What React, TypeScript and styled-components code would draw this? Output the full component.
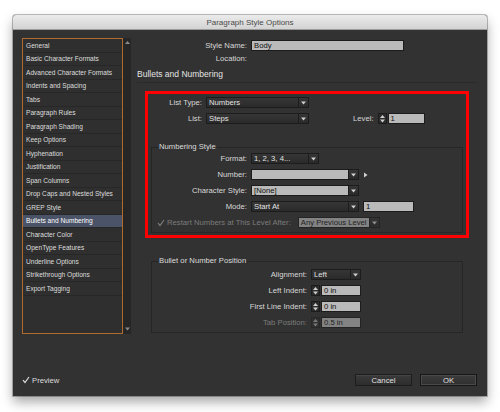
import styled, { createGlobalStyle } from "styled-components";

const GlobalStyle = createGlobalStyle`
  html, body {
    margin: 0;
    padding: 0;
    background: #ffffff;
  }
  body {
    font-family: "Liberation Sans", Arial, sans-serif;
  }
`;

const Page = styled.div`
  padding: 15px 13px 16px 13px;
  width: 474px;
`;

const Window = styled.div`
  width: 474px;
  height: 381px;
  display: flex;
  flex-direction: column;
  background: #323232;
  box-shadow: 0 6px 12px rgba(0, 0, 0, 0.35), 0 0 0 1px rgba(0, 0, 0, 0.25);
  border-radius: 3px 3px 0 0;
  overflow: hidden;
`;

const TitleBar = styled.div`
  height: 15px;
  flex: none;
  display: flex;
  align-items: center;
  justify-content: center;
  background: linear-gradient(#ebebeb, #d3d3d3);
  border-bottom: 1px solid #9c9c9c;
  box-sizing: border-box;
  color: #4a4a4a;
  font-size: 8px;
`;

const Body = styled.div`
  flex: 1;
  display: flex;
  flex-direction: column;
  padding: 8px 10px 10px 9px;
  font-size: 7.7px;
  color: #d8d8d8;
`;

const Columns = styled.div`
  display: flex;
  gap: 6px;
`;

const Sidebar = styled.div`
  display: flex;
  height: 296px;
`;

const List = styled.div`
  width: 101px;
  box-sizing: border-box;
  border: 1px solid #b2692c;
  background: #2f2f2f;
  display: flex;
  flex-direction: column;
`;

const ListItem = styled.div<{ $selected?: boolean }>`
  height: 13.5px;
  box-sizing: border-box;
  flex: none;
  display: flex;
  align-items: center;
  padding-left: 3px;
  font-size: 6.6px;
  color: ${(p) => (p.$selected ? "#ffffff" : "#dedede")};
  background: ${(p) => (p.$selected ? "#4a5367" : "transparent")};
  border-bottom: 1px solid #272727;
  white-space: nowrap;
`;

const ScrollBar = styled.div`
  width: 8px;
  background: #262626;
  display: flex;
  flex-direction: column;
  justify-content: space-between;
  align-items: center;
  padding: 3px 0;
  box-sizing: border-box;
`;

const Main = styled.div`
  width: 340px;
  display: flex;
  flex-direction: column;
`;

const Row = styled.div<{ $label: number }>`
  display: flex;
  align-items: center;
  height: 11px;
  gap: 4px;
  & > label:first-child {
    width: ${(p) => p.$label}px;
  }
`;

const Label = styled.label<{ $disabled?: boolean }>`
  flex: none;
  text-align: right;
  white-space: nowrap;
  color: ${(p) => (p.$disabled ? "#7c7c7c" : "#d8d8d8")};
`;

const Header = styled.div`
  display: flex;
  flex-direction: column;
  gap: 1.5px;
  padding-top: 2px;
`;

const Heading = styled.div`
  font-size: 8.5px;
  line-height: 10px;
  color: #e2e2e2;
  padding: 5px 0 3.5px;
  border-bottom: 1px solid #2a2a2a;
  margin-bottom: 8px;
`;

const Highlight = styled.div`
  margin: 0 8px;
  border: 3px solid #ff0000;
  padding: 3px 0 2px;
  display: flex;
  flex-direction: column;
  gap: 5px;
`;

const LevelGroup = styled.div`
  display: flex;
  align-items: center;
  gap: 4px;
  margin-left: 40px;
`;

const Group = styled.fieldset<{ $top: number; $side: number; $pad: number }>`
  margin: ${(p) => `${p.$top}px ${p.$side}px 0`};
  padding: ${(p) => p.$pad}px 0 4px;
  border: 1px solid #262626;
  display: flex;
  flex-direction: column;
  gap: 5px;
  min-width: 0;
`;

const Legend = styled.legend`
  font-size: 7.7px;
  color: #dcdcdc;
  padding: 0 1px;
  margin-left: 6px;
  line-height: 10px;
`;

const Field = styled.div<{ $w: number; $light?: boolean; $disabled?: boolean }>`
  width: ${(p) => p.$w}px;
  height: 11px;
  box-sizing: border-box;
  display: flex;
  align-items: stretch;
  flex: none;
  border: 1px solid #1c1c1c;
  background: ${(p) =>
    p.$light ? "#bababa" : "linear-gradient(#363636, #2a2a2a)"};
  opacity: ${(p) => (p.$disabled ? 0.6 : 1)};
`;

const FieldText = styled.span<{ $light?: boolean }>`
  flex: 1;
  display: flex;
  align-items: center;
  padding-left: 2px;
  white-space: nowrap;
  overflow: hidden;
  color: ${(p) => (p.$light ? "#111111" : "#e2e2e2")};
`;

const ArrowBox = styled.span`
  width: 9px;
  flex: none;
  display: flex;
  align-items: center;
  justify-content: center;
  background: linear-gradient(#363636, #2a2a2a);
  border-left: 1px solid #1c1c1c;
`;

const Stepper = styled.div<{ $disabled?: boolean }>`
  width: 9px;
  height: 11px;
  box-sizing: border-box;
  flex: none;
  border: 1px solid #1c1c1c;
  background: #2c2c2c;
  display: flex;
  flex-direction: column;
  align-items: center;
  justify-content: center;
  gap: 1px;
  opacity: ${(p) => (p.$disabled ? 0.45 : 1)};
`;

const Spin = styled.div`
  display: flex;
  align-items: center;
  gap: 1px;
`;

const CheckRow = styled.div`
  display: flex;
  align-items: center;
  height: 11px;
  gap: 7px;
  padding-left: 5px;
`;

const CheckBox = styled.span<{ $disabled?: boolean }>`
  display: flex;
  align-items: center;
  gap: 2px;
  color: ${(p) => (p.$disabled ? "#7c7c7c" : "#dcdcdc")};
  white-space: nowrap;
`;

const Footer = styled.div`
  margin-top: auto;
  display: flex;
  align-items: center;
  justify-content: space-between;
`;

const Buttons = styled.div`
  display: flex;
  gap: 8px;
`;

const Button = styled.div<{ $default?: boolean }>`
  width: 57px;
  height: 12px;
  box-sizing: border-box;
  display: flex;
  align-items: center;
  justify-content: center;
  border: 1px solid ${(p) => (p.$default ? "#161616" : "#1d1d1d")};
  background: ${(p) =>
    p.$default
      ? "linear-gradient(#3c3c3c, #2f2f2f)"
      : "linear-gradient(#3a3a3a, #2d2d2d)"};
  box-shadow: ${(p) =>
    p.$default ? "inset 0 0 0 1px #4a4a4a" : "inset 0 1px 0 #444"};
  color: #e0e0e0;
  font-size: 7.7px;
`;

const Down = ({ color = "#d0d0d0" }: { color?: string }) => (
  <svg width="5" height="4" viewBox="0 0 5 4">
    <path d="M0 0.5h5L2.5 3.5z" fill={color} />
  </svg>
);

const Up = ({ color = "#d0d0d0" }: { color?: string }) => (
  <svg width="5" height="3" viewBox="0 0 5 3">
    <path d="M0 3h5L2.5 0z" fill={color} />
  </svg>
);

const Tick = ({ color = "#dcdcdc" }: { color?: string }) => (
  <svg width="8" height="8" viewBox="0 0 8 8">
    <path d="M1 4.2l2 2.3L7 1" stroke={color} strokeWidth="1.2" fill="none" />
  </svg>
);

const Select = ({ w, text }: { w: number; text: string }) => (
  <Field $w={w}>
    <FieldText>{text}</FieldText>
    <ArrowBox>
      <Down />
    </ArrowBox>
  </Field>
);

const Combo = ({ w, text, disabled }: { w: number; text: string; disabled?: boolean }) => (
  <Field $w={w} $light $disabled={disabled}>
    <FieldText $light>{text}</FieldText>
    <ArrowBox>
      <Down />
    </ArrowBox>
  </Field>
);

const SpinField = ({ w, text, disabled }: { w: number; text: string; disabled?: boolean }) => (
  <Spin>
    <Stepper $disabled={disabled}>
      <Up />
      <Down />
    </Stepper>
    <Field $w={w} $light $disabled={disabled}>
      <FieldText $light>{text}</FieldText>
    </Field>
  </Spin>
);

const sections = [
  "General",
  "Basic Character Formats",
  "Advanced Character Formats",
  "Indents and Spacing",
  "Tabs",
  "Paragraph Rules",
  "Paragraph Shading",
  "Keep Options",
  "Hyphenation",
  "Justification",
  "Span Columns",
  "Drop Caps and Nested Styles",
  "GREP Style",
  "Bullets and Numbering",
  "Character Color",
  "OpenType Features",
  "Underline Options",
  "Strikethrough Options",
  "Export Tagging",
];

export default function App() {
  return (
    <Page>
      <GlobalStyle />
      <Window>
        <TitleBar>Paragraph Style Options</TitleBar>
        <Body>
          <Columns>
            <Sidebar>
              <List>
                {sections.map((s) => (
                  <ListItem key={s} $selected={s === "Bullets and Numbering"}>
                    {s}
                  </ListItem>
                ))}
              </List>
              <ScrollBar>
                <Up color="#8a8a8a" />
                <Down color="#8a8a8a" />
              </ScrollBar>
            </Sidebar>

            <Main>
              <Header>
                <Row $label={110}>
                  <Label>Style Name:</Label>
                  <Field $w={153} $light>
                    <FieldText $light>Body</FieldText>
                  </Field>
                </Row>
                <Row $label={110}>
                  <Label>Location:</Label>
                </Row>
              </Header>
              <Heading>Bullets and Numbering</Heading>

              <Highlight>
                <Row $label={54}>
                  <Label>List Type:</Label>
                  <Select w={103} text="Numbers" />
                </Row>
                <Row $label={54}>
                  <Label>List:</Label>
                  <Select w={103} text="Steps" />
                  <LevelGroup>
                    <Label>Level:</Label>
                    <SpinField w={37} text="1" />
                  </LevelGroup>
                </Row>

                <Group $top={13} $side={3} $pad={1}>
                  <Legend>Numbering Style</Legend>
                  <Row $label={95}>
                    <Label>Format:</Label>
                    <Select w={68} text="1, 2, 3, 4..." />
                  </Row>
                  <Row $label={95}>
                    <Label>Number:</Label>
                    <Combo w={108} text="" />
                    <svg width="5" height="6" viewBox="0 0 5 6">
                      <path d="M1 0.5v5L4.5 3z" fill="#cfcfcf" />
                    </svg>
                  </Row>
                  <Row $label={95}>
                    <Label>Character Style:</Label>
                    <Combo w={108} text="[None]" />
                  </Row>
                  <Row $label={95}>
                    <Label>Mode:</Label>
                    <Select w={108} text="Start At" />
                    <Field $w={51} $light>
                      <FieldText $light>1</FieldText>
                    </Field>
                  </Row>
                  <CheckRow>
                    <CheckBox $disabled>
                      <Tick color="#7c7c7c" />
                      Restart Numbers at This Level After:
                    </CheckBox>
                    <Combo w={82} text="Any Previous Level" disabled />
                  </CheckRow>
                </Group>
              </Highlight>

              <Group $top={18} $side={14} $pad={3}>
                <Legend>Bullet or Number Position</Legend>
                <Row $label={155}>
                  <Label>Alignment:</Label>
                  <Select w={50} text="Left" />
                </Row>
                <Row $label={155}>
                  <Label>Left Indent:</Label>
                  <SpinField w={40} text="0 in" />
                </Row>
                <Row $label={155}>
                  <Label>First Line Indent:</Label>
                  <SpinField w={40} text="0 in" />
                </Row>
                <Row $label={155}>
                  <Label $disabled>Tab Position:</Label>
                  <SpinField w={40} text="0.5 in" disabled />
                </Row>
              </Group>
            </Main>
          </Columns>

          <Footer>
            <CheckBox>
              <Tick />
              Preview
            </CheckBox>
            <Buttons>
              <Button>Cancel</Button>
              <Button $default>OK</Button>
            </Buttons>
          </Footer>
        </Body>
      </Window>
    </Page>
  );
}
